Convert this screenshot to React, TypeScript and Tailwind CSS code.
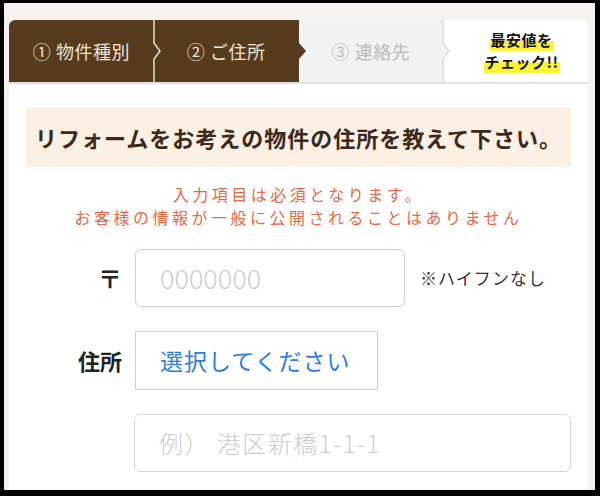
import type { ReactNode } from 'react'

const jp = { fontFamily: '"Noto Sans CJK JP", "Noto Sans", sans-serif' }

function Tab({ children, className, sep }: { children: ReactNode; className: string; sep?: ReactNode }) {
  return (
    <div className={`relative flex h-[62px] items-center justify-center ${className}`}>
      {children}
      {sep}
    </div>
  )
}

function LineChevron({ color, fill }: { color: string; fill: string }) {
  return (
    <svg className="absolute right-[-7px] top-0 z-10" width="14" height="62" viewBox="0 0 14 62">
      <path d="M7 23 L13 31 L7 39 Z" fill={fill} />
      <path d="M7 0 V23 L13 31 L7 39 V62" fill="none" stroke={color} strokeWidth="1.5" />
    </svg>
  )
}

function PointChevron() {
  return (
    <svg className="absolute right-[-7px] top-0 z-10" width="7" height="62" viewBox="0 0 7 62">
      <path d="M0 23 L7 31 L0 39 Z" fill="#573b1e" />
    </svg>
  )
}

export default function App() {
  return (
    <div className="h-[496px] w-[600px] bg-black pb-[6px] pl-[4px] pr-[5px] pt-[3px]" style={jp}>
      <div className="flex h-full flex-col overflow-hidden bg-[#f5f2ef] pl-[5px] pr-[7px] pt-[17px]">
        <div className="flex flex-1 flex-col rounded-t-[6px] bg-white">
          <div className="grid grid-cols-4 border-b-2 border-[#e6e1dc]">
            <Tab
              className="rounded-tl-[6px] bg-[#573b1e] text-[18px] tracking-[0.5px] text-[#efe4d8]"
              sep={<LineChevron color="#e8dccd" fill="#573b1e" />}
            >
              ① 物件種別
            </Tab>
            <Tab className="bg-[#573b1e] text-[18px] tracking-[0.5px] text-[#efe4d8]" sep={<PointChevron />}>
              ② ご住所
            </Tab>
            <Tab
              className="bg-[#f2f2f2] text-[18px] tracking-[0.5px] text-[#b9b9b9]"
              sep={<LineChevron color="#dcdcdc" fill="#f2f2f2" />}
            >
              ③ 連絡先
            </Tab>
            <Tab className="flex-col rounded-tr-[6px] bg-white pl-3 text-[15px] font-bold leading-[22px] tracking-[0.5px] text-[#111]">
              <span className="bg-[linear-gradient(transparent_55%,#fbf236_55%)] px-[1px]">最安値を</span>
              <span className="bg-[linear-gradient(transparent_50%,#fbf236_50%)] px-[1px]">チェック!!</span>
            </Tab>
          </div>

          <div className="px-[17px] pt-[23px]">
            <div className="flex h-[60px] items-center justify-center bg-[#fcefe3] text-[22px] font-bold tracking-[1px] text-[#3b2a1c]">
              リフォームをお考えの物件の住所を教えて下さい。
            </div>

            <div className="mt-[16px] text-center text-[16px] leading-[23px] tracking-[3.5px] text-[#e9673f]">
              <p>入力項目は必須となります。</p>
              <p>お客様の情報が一般に公開されることはありません</p>
            </div>

            <div className="mt-[20px] flex items-center">
              <span className="w-[96px] text-right text-[24px] font-bold text-[#222]">〒</span>
              <div className="ml-[13px] flex h-[58px] w-[270px] items-center rounded-[6px] border border-[#cfcfcf] pl-[24px] text-[27px] font-light text-[#cdcdcd]">
                0000000
              </div>
              <span className="ml-[15px] text-[17px] tracking-[1px] text-[#333]">※ハイフンなし</span>
            </div>

            <div className="mt-[24px] flex items-center">
              <span className="w-[96px] text-right text-[22px] font-bold text-[#222]">住所</span>
              <div className="ml-[13px] flex h-[59px] w-[243px] items-center border border-[#cfcfcf] pl-[24px] text-[23px] tracking-[1px] text-[#2b7de1]">
                選択してください
              </div>
            </div>

            <div className="ml-[108px] mt-[24px] flex h-[58px] items-center rounded-[6px] border border-[#d4d4d4] pl-[24px] text-[24px] font-light tracking-[1.5px] text-[#cdcdcd]">
              例） 港区新橋1-1-1
            </div>
          </div>
        </div>
      </div>
    </div>
  )
}
